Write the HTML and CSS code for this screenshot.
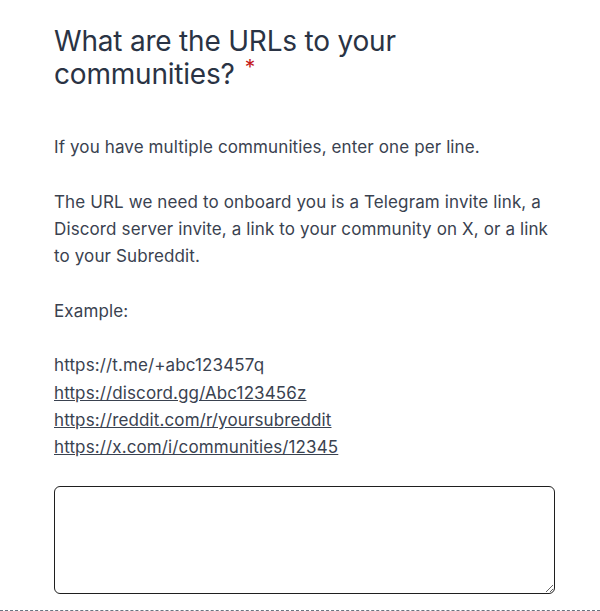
FILE: index.html
```html
<!DOCTYPE html>
<html lang="en">
<head>
<meta charset="utf-8">
<title>Communities</title>
<link rel="stylesheet" href="styles.css">
</head>
<body>
<div class="question">
  <h2 class="title">What are the URLs to your communities?<span class="req">*</span></h2>
  <div class="desc">If you have multiple communities, enter one per line.<br><br>The URL we need to onboard you is a Telegram invite link, a Discord server invite, a link to your community on X, or a link to your Subreddit.<br><br>Example:<br><br>https://t.me/+abc123457q<br><a href="#">https://discord.gg/Abc123456z</a><br><a href="#">https://reddit.com/r/yoursubreddit</a><br><a href="#">https://x.com/i/communities/12345</a></div>
  <textarea class="answer"></textarea>
</div>
</body>
</html>
```

FILE: styles.css
```css
html, body {
  margin: 0;
  padding: 0;
  background: #ffffff;
}
body {
  font-family: Inter, "Noto Sans", sans-serif;
}
.question {
  padding: 25px 46px 16px 54px;
  border-bottom: 1px dashed #6b7280;
}
.title {
  margin: 0;
  font-size: 28px;
  font-weight: 400;
  line-height: 33px;
  color: #2a3344;
  letter-spacing: -0.2px;
}
.req {
  color: #c41a1a;
  font-size: 21px;
  vertical-align: top;
  margin-left: 10px;
  line-height: 20px;
}
.desc {
  margin-top: 43px;
  font-size: 17px;
  letter-spacing: 0.12px;
  line-height: 27.3px;
  color: #3a4250;
}
.desc a {
  color: #3a4250;
  text-decoration: underline;
}
.answer {
  display: block;
  box-sizing: border-box;
  margin-top: 24px;
  width: 501px;
  height: 108px;
  border: 1px solid #1f1f1f;
  border-radius: 6px;
  resize: vertical;
  font-family: inherit;
}
```
